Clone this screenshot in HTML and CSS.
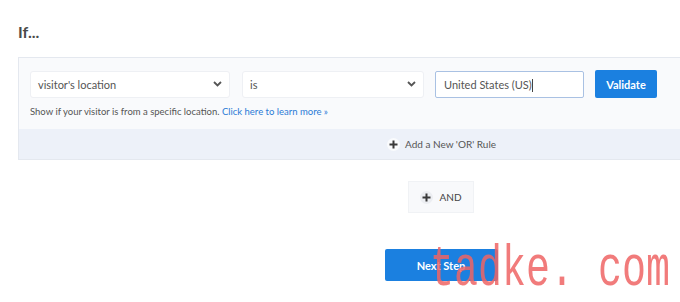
FILE: index.html
```html
<!DOCTYPE html>
<html>
<head>
<meta charset="utf-8">
<link rel="stylesheet" href="styles.css">
</head>
<body>
<div class="page">
  <h1 class="title">If...</h1>
  <div class="panel">
    <div class="rule">
      <div class="fields">
        <div class="select select-wide">
          <span>visitor's location</span>
          <svg class="chev" width="9" height="6" viewBox="0 0 9 6"><path d="M1 1l3.5 3.5L8 1" fill="none" stroke="#555" stroke-width="1.8"/></svg>
        </div>
        <div class="select select-mid">
          <span>is</span>
          <svg class="chev" width="9" height="6" viewBox="0 0 9 6"><path d="M1 1l3.5 3.5L8 1" fill="none" stroke="#555" stroke-width="1.8"/></svg>
        </div>
        <div class="input">United States (US)<span class="caret"></span></div>
        <button class="btn btn-validate">Validate</button>
      </div>
      <p class="help">Show if your visitor is from a specific location. <a class="link">Click here to learn more »</a></p>
    </div>
    <div class="or-bar">
      <span class="plus"><svg width="9" height="9" viewBox="0 0 9 9"><path d="M4.5 0.5v8M0.5 4.5h8" stroke="#3a3a3a" stroke-width="2"/></svg></span>
      <span>Add a New 'OR' Rule</span>
    </div>
  </div>
  <div class="actions">
    <div class="and-btn">
      <span class="plus"><svg width="9" height="9" viewBox="0 0 9 9"><path d="M4.5 0.5v8M0.5 4.5h8" stroke="#3a3a3a" stroke-width="2"/></svg></span>
      <span>AND</span>
    </div>
    <button class="btn btn-next">Next Step</button>
  </div>
</div>
<div class="watermark">tadke. com</div>
</body>
</html>
```
FILE: styles.css
```css
html, body {
  margin: 0;
  padding: 0;
  overflow: hidden;
  background: #ffffff;
}
body {
  font-family: Lato, "Open Sans", sans-serif;
  color: #555;
  width: 680px;
  height: 302px;
  position: relative;
}
.page {
  padding-left: 18px;
  width: 846px;
}
.title {
  margin: 0;
  padding-top: 22px;
  height: 57px;
  box-sizing: border-box;
  font-size: 16px;
  line-height: 20px;
  font-weight: 700;
  color: #4a4a4a;
}
.panel {
  border-top: 1px solid #e4e8ef;
  border-left: 1px solid #e4e8ef;
  border-bottom: 1px solid #e4e8ef;
}
.rule {
  background: #f9fafc;
  padding: 12px 0 0 11px;
  height: 71px;
  box-sizing: border-box;
}
.fields {
  display: flex;
  align-items: center;
}
.select {
  height: 27px;
  box-sizing: border-box;
  background: #fff;
  border: 1px solid #eef0f4;
  border-radius: 3px;
  display: flex;
  align-items: center;
  justify-content: space-between;
  padding: 0 7px 0 7px;
  font-size: 11px;
  color: #555;
}
.select-wide { width: 200px; }
.select-mid { width: 182px; margin-left: 12px; }
.chev { display: block; }
.input {
  width: 149px;
  height: 27px;
  box-sizing: border-box;
  margin-left: 11px;
  border: 1px solid #a9c1e3;
  border-radius: 2px;
  background: #fff;
  font-size: 11px;
  line-height: 25px;
  padding-left: 8px;
  color: #555;
}
.caret {
  display: inline-block;
  width: 1px;
  height: 13px;
  background: #444;
  vertical-align: -3px;
}
.btn {
  border: none;
  color: #fff;
  background: #1b80e0;
  font-family: Lato, sans-serif;
  font-weight: 700;
  font-size: 11px;
  border-radius: 2px;
  padding: 0;
}
.btn-validate {
  width: 62px;
  height: 28px;
  margin-left: 11px;
}
.help {
  margin: 8px 0 0 0;
  font-size: 9.5px;
  line-height: 12px;
  color: #555;
}
.link { color: #2b7bd6; }
.or-bar {
  height: 30px;
  background: #edf1f9;
  display: flex;
  align-items: center;
  justify-content: center;
  gap: 5px;
  font-size: 10px;
  color: #555;
}
.plus {
  width: 13px;
  height: 13px;
  border-radius: 50%;
  background: rgba(255,255,255,0.7);
  display: flex;
  align-items: center;
  justify-content: center;
}
.actions {
  display: flex;
  flex-direction: column;
  align-items: center;
  padding-top: 21px;
}
.and-btn {
  width: 66px;
  height: 32px;
  box-sizing: border-box;
  background: #f8f9fb;
  border: 1px solid #f0f2f5;
  display: flex;
  align-items: center;
  justify-content: center;
  gap: 6px;
  font-size: 10px;
  color: #444;
}
.and-btn .plus { background: #eceef2; }
.btn-next {
  margin-top: 36px;
  width: 113px;
  height: 32px;
  font-size: 11px;
}
.watermark {
  position: absolute;
  left: 430px;
  top: 259px;
  font-family: "Liberation Mono", monospace;
  font-size: 40px;
  line-height: 40px;
  color: rgba(238, 100, 100, 0.85);
  transform: scaleY(1.45);
  transform-origin: left bottom;
  white-space: pre;
}
```
